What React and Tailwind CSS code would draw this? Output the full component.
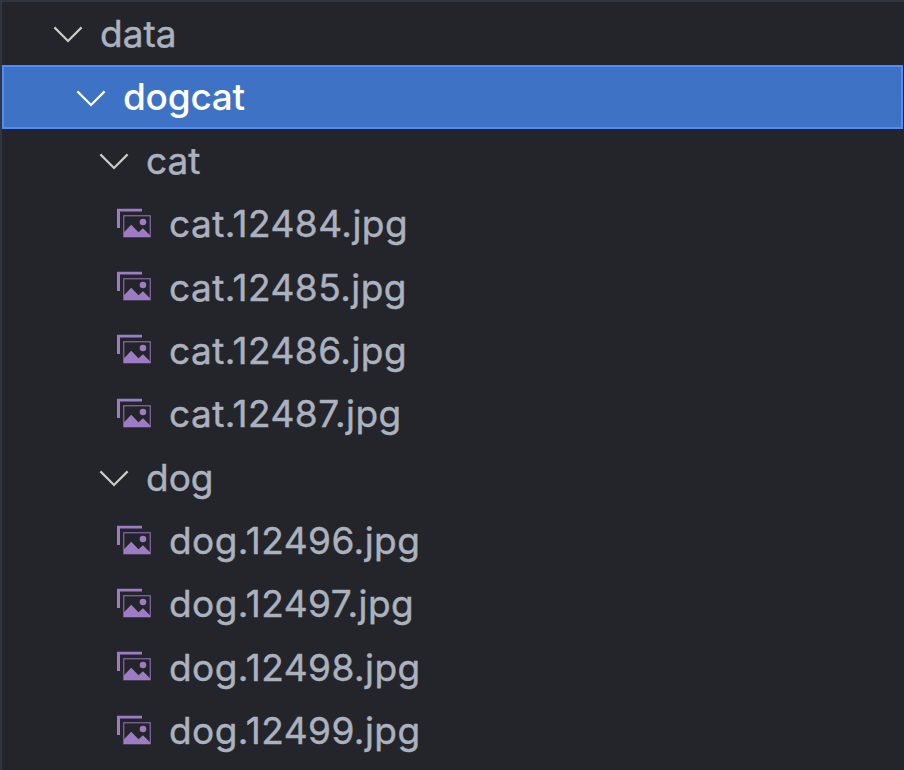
import React from "react";

const rows = [
  { name: "data", pad: "pl-[51px]", folder: true },
  { name: "dogcat", pad: "pl-[72px]", folder: true, selected: true },
  { name: "cat", pad: "pl-[97px]", folder: true },
  { name: "cat.12484.jpg" },
  { name: "cat.12485.jpg" },
  { name: "cat.12486.jpg" },
  { name: "cat.12487.jpg" },
  { name: "dog", pad: "pl-[97px]", folder: true },
  { name: "dog.12496.jpg" },
  { name: "dog.12497.jpg" },
  { name: "dog.12498.jpg" },
  { name: "dog.12499.jpg" },
];

function Chevron({ selected }) {
  return (
    <svg
      className={`mt-px mr-[17px] h-[18px] w-[30px] shrink-0 ${selected ? "text-white" : "text-[#cccac6]"}`}
      viewBox="0 0 30 18"
      fill="none"
      stroke="currentColor"
      strokeWidth="2.2"
    >
      <path d="M1.4 2.4 15 16 28.6 2.4" />
    </svg>
  );
}

function ImageIcon() {
  return (
    <svg className="mr-[18px] mb-[2px] h-[30px] w-[34px] shrink-0 text-[#9d7cc4]" viewBox="0 0 34 30" fill="currentColor">
      <path d="M0 .7H25V3.5H3V20H0Z" />
      <rect x="6.75" y="7.75" width="26.5" height="21" fill="none" stroke="currentColor" strokeWidth="1.2" opacity=".8" />
      <circle cx="26" cy="14" r="3.3" />
      <path d="M7 29V24.3L14.2 16.8 21.5 24.3 26 20.3 33 27.3V29Z" />
    </svg>
  );
}

export default function App() {
  return (
    <div className="h-[770px] w-[904px] overflow-hidden border-t-2 border-l-2 border-[#2f3640] bg-[#24252a] font-['Inter',sans-serif] text-[37px] leading-none text-[#abb2bf]">
      <ul>
        {rows.map((row) => (
          <li
            key={row.name}
            className={`flex h-[63.36px] items-center ${row.folder ? row.pad : "pl-[115px] tracking-[0.44px]"} ${
              row.selected ? "mr-px border-2 border-[#528bff] bg-[#3e72c4] text-white" : ""
            }`}
          >
            {row.folder ? <Chevron selected={row.selected} /> : <ImageIcon />}
            <span className={row.selected ? "mb-[2px] font-medium tracking-[-0.25px]" : "[-webkit-text-stroke:0.45px_#abb2bf]"}>
              {row.name}
            </span>
          </li>
        ))}
      </ul>
    </div>
  );
}
